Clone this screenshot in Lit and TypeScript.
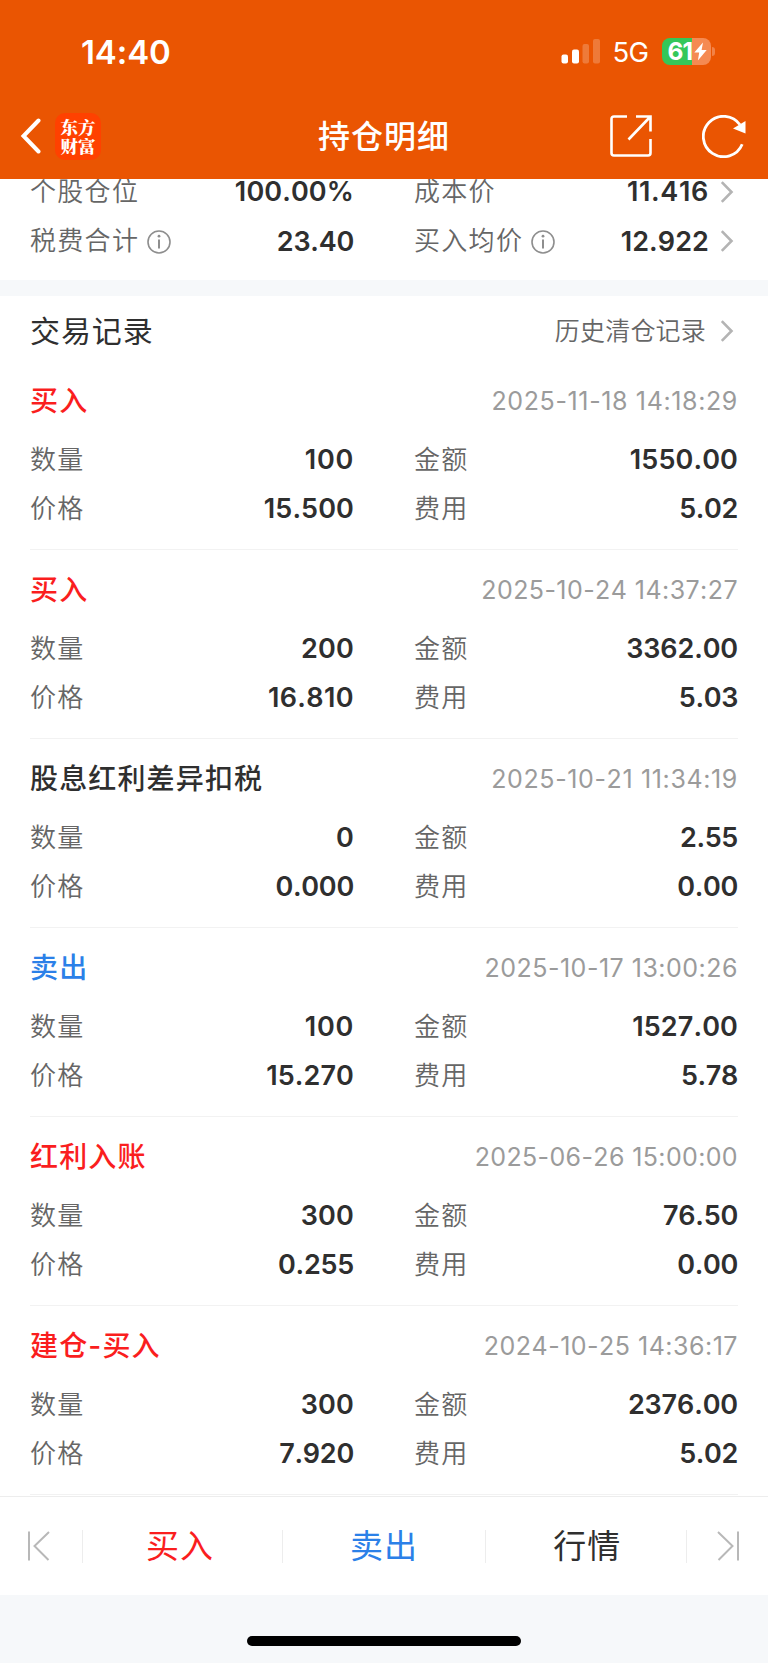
import { LitElement, html, css, svg } from "lit";
import { customElement, property } from "lit/decorators.js";
import { classMap } from "lit/directives/class-map.js";
import { styleMap } from "lit/directives/style-map.js";

type Tone = "buy" | "sell" | "plain";

interface TradeRecord {
  title: string;
  tone: Tone;
  time: string;
  count: string;
  amount: string;
  price: string;
  fee: string;
}

const RECORDS: TradeRecord[] = [
  { title: "买入", tone: "buy", time: "2025-11-18 14:18:29", count: "100", amount: "1550.00", price: "15.500", fee: "5.02" },
  { title: "买入", tone: "buy", time: "2025-10-24 14:37:27", count: "200", amount: "3362.00", price: "16.810", fee: "5.03" },
  { title: "股息红利差异扣税", tone: "plain", time: "2025-10-21 11:34:19", count: "0", amount: "2.55", price: "0.000", fee: "0.00" },
  { title: "卖出", tone: "sell", time: "2025-10-17 13:00:26", count: "100", amount: "1527.00", price: "15.270", fee: "5.78" },
  { title: "红利入账", tone: "buy", time: "2025-06-26 15:00:00", count: "300", amount: "76.50", price: "0.255", fee: "0.00" },
  { title: "建仓-买入", tone: "buy", time: "2024-10-25 14:36:17", count: "300", amount: "2376.00", price: "7.920", fee: "5.02" },
];

function tracking(text: string, base: number, perOne: number, perDot: number) {
  const ones = text.split("1").length - 1;
  const dots = text.split(".").length - 1;
  const px = base + (ones * perOne - dots * perDot) / text.length;
  return styleMap({ letterSpacing: `${px.toFixed(3)}px` });
}

const valueTracking = (text: string) => tracking(text, 0.15, 1.7, 2);

const chevron = html`<svg class="chevron" width="14" height="24" viewBox="0 0 14 24" fill="none">
  ${svg`<path d="M1.8 2.2L11.5 12L1.8 21.8" stroke="#b4b4b4" stroke-width="2.6"/>`}
</svg>`;

const info = html`<svg class="info" width="24" height="24" viewBox="0 0 24 24" fill="none">
  ${svg`<circle cx="12" cy="12" r="11" stroke="#8e8e8e" stroke-width="1.6"/>
  <path d="M12 9.4V18.6" stroke="#8e8e8e" stroke-width="2"/>
  <circle cx="12" cy="6.2" r="1.4" fill="#8e8e8e"/>`}
</svg>`;

@customElement("status-bar")
class StatusBar extends LitElement {
  static styles = css`
    :host { display: flex; align-items: center; height: 102px; padding: 0 53px 0 81px; box-sizing: border-box; color: #fff; font-family: Inter, sans-serif; }
    .time { flex: 1; font-size: 33px; font-weight: 600; letter-spacing: -0.1px; padding-top: 1px; }
    .signal { margin-right: 13px; }
    .net { width: 49px; font-size: 27.5px; letter-spacing: -0.6px; padding-top: 2px; }
    .battery { display: flex; align-items: center; }
    .cell { display: flex; align-items: center; width: 49px; height: 27px; padding-left: 6px; box-sizing: border-box; border-radius: 8px; background: linear-gradient(90deg, #34c759 61%, #f58a52 61%); }
    .level { width: 26px; font-size: 24.5px; font-weight: 700; letter-spacing: -1px; line-height: 27px; }
    .tip { width: 3px; height: 9px; margin-left: 1.5px; border-radius: 0 3px 3px 0; background: #f28247; }
  `;
  render() {
    return html`
      <span class="time">14:40</span>
      <svg class="signal" width="39" height="25" viewBox="0 0 39 25" fill="#fff">
        <rect x="0.5" y="15.5" width="6.5" height="9" rx="2" /><rect x="11" y="10.5" width="7" height="14" rx="2" />
        <rect x="21.5" y="5" width="6.5" height="19.5" rx="2" opacity=".22" /><rect x="32" y="0" width="7" height="24.5" rx="2" opacity=".22" />
      </svg>
      <span class="net">5G</span>
      <span class="battery">
        <span class="cell"><span class="level">61</span>
          <svg width="13" height="19" viewBox="0 0 13 19"><path d="M9 0.5L0.3 10.6H5.2L3.9 18.5L12.7 8H7.6Z" fill="#fff" /></svg>
        </span><span class="tip"></span>
      </span>`;
  }
}

@customElement("nav-bar")
class NavBar extends LitElement {
  static styles = css`
    :host { display: grid; grid-template-columns: 1fr auto 1fr; align-items: center; height: 77px; padding: 0 22px 0 20px; box-sizing: border-box; color: #fff; font-family: "Noto Sans CJK SC", sans-serif; }
    .left, .right { display: flex; align-items: center; margin-top: -9px; }
    .right { justify-content: flex-end; gap: 50px; }
    .logo { display: grid; grid-template-rows: 19px 19px; align-content: center; width: 46px; height: 47px; margin-left: 14px; border-radius: 10px; background: #ff4100; text-align: center; font: 900 17.5px/19px "Noto Serif CJK SC", "Noto Sans CJK SC", serif; }
    .title { margin: -13px 0 0 2px; font-size: 32px; font-weight: 500; line-height: 40px; letter-spacing: 1px; }
  `;
  render() {
    return html`
      <div class="left">
        <svg width="21" height="36" viewBox="0 0 21 36" fill="none"><path d="M18.5 2.5L3.5 18L18.5 33.5" stroke="#fff" stroke-width="4" stroke-linecap="round" /></svg>
        <div class="logo"><span>东方</span><span>财富</span></div>
      </div>
      <h1 class="title">持仓明细</h1>
      <div class="right">
        <svg width="42" height="42" viewBox="0 0 42 42" fill="none" stroke="#fff" stroke-width="2.6">
          <path d="M17 1.5H4Q1.5 1.5 1.5 4V38Q1.5 40.5 4 40.5H38Q40.5 40.5 40.5 38V24" />
          <path d="M26 1.5H40.5V16.5M40 2L18.5 24.5" />
        </svg>
        <svg width="44" height="43" viewBox="0 0 44 43" fill="none">
          <path d="M40.2 29.2A20.2 20.2 0 1 1 38 9.8" stroke="#fff" stroke-width="2.8" />
          <path d="M43.5 6V18.5L31 13.5Z" fill="#fff" />
        </svg>
      </div>`;
  }
}

@customElement("trade-record")
class TradeRecordItem extends LitElement {
  @property({ attribute: false }) record!: TradeRecord;

  static styles = css`
    :host { display: block; height: 189px; margin: 0 30px; padding-top: 19px; box-sizing: border-box; border-bottom: 1px solid #f2f2f2; font-family: Inter, "Noto Sans CJK SC", sans-serif; font-kerning: none; font-feature-settings: "calt" 0; }
    .head { display: flex; justify-content: space-between; align-items: center; height: 42px; margin-bottom: 13px; }
    .title { font-size: 28px; font-weight: 500; letter-spacing: 1.15px; line-height: 40px; color: #2f2f2f; }
    .buy { color: #fa1e1e; }
    .sell { color: #2b80e8; }
    .time { margin-top: -1px; font-size: 25px; color: #9b9b9b; }
    .grid { display: grid; grid-template-columns: 324px 324px; column-gap: 60px; grid-auto-rows: 49.4px; }
    .cell { display: flex; justify-content: space-between; align-items: center; }
    .label { font-size: 26px; font-weight: 350; letter-spacing: 1.2px; line-height: 38px; color: #666; }
    .value { margin-top: -1px; font-size: 27px; font-weight: 600; color: #2f2f2f; }
  `;
  private cell(label: string, value: string) {
    return html`<div class="cell"><span class="label">${label}</span><span class="value" style=${valueTracking(value)}>${value}</span></div>`;
  }
  render() {
    const r = this.record;
    return html`
      <div class="head">
        <span class=${classMap({ title: true, buy: r.tone === "buy", sell: r.tone === "sell" })}>${r.title}</span>
        <span class="time" style=${tracking(r.time, 0.3, 1.25, 0)}>${r.time}</span>
      </div>
      <div class="grid">
        ${this.cell("数量", r.count)} ${this.cell("金额", r.amount)}
        ${this.cell("价格", r.price)} ${this.cell("费用", r.fee)}
      </div>`;
  }
}

@customElement("action-bar")
class ActionBar extends LitElement {
  static styles = css`
    :host { display: grid; grid-template-columns: 82px 200px 203px 200.5px 1fr; align-items: center; height: 99px; border-top: 1px solid #ededed; box-sizing: border-box; background: #fff; font-family: "Noto Sans CJK SC", sans-serif; }
    .item { display: flex; align-items: center; justify-content: center; height: 33px; font-size: 33px; letter-spacing: 1px; border-left: 1px solid #ededed; box-sizing: border-box; color: #2f2f2f; }
    .item span { margin-top: -4px; }
    .buy { color: #fa1e1e; padding-right: 5px; }
    .sell { color: #2b80e8; }
    .quote { padding-left: 3px; }
    .edge { border-left: none; }
    .first { padding-right: 5px; }
    .last { border-left: 1px solid #ededed; padding-left: 2px; }
  `;
  render() {
    const arrow = svg`<path d="M2 0.5V29.5M22 1L7.5 15L21.5 29" />`;
    return html`
      <div class="item edge first"><svg width="24" height="30" viewBox="0 0 24 30" fill="none" stroke="#b8b8b8" stroke-width="2">${arrow}</svg></div>
      <div class="item buy"><span>买入</span></div>
      <div class="item sell"><span>卖出</span></div>
      <div class="item quote"><span>行情</span></div>
      <div class="item last"><svg width="24" height="30" viewBox="0 0 24 30" fill="none" stroke="#b8b8b8" stroke-width="2"><g transform="matrix(-1 0 0 1 24 0)">${arrow}</g></svg></div>`;
  }
}

@customElement("app-root")
class AppRoot extends LitElement {
  static styles = css`
    :host { display: flex; flex-direction: column; width: 768px; height: 1663px; overflow: hidden; background: #fff; font-family: Inter, "Noto Sans CJK SC", sans-serif; font-kerning: none; font-feature-settings: "calt" 0; }
    .top { height: 179px; flex: none; background: #ea5502; }
    .summary { display: grid; grid-template-columns: 324px 324px; column-gap: 60px; grid-auto-rows: 49.4px; height: 101px; padding: 0 30px; box-sizing: border-box; overflow: hidden; align-content: end; padding-bottom: 14px; flex: none; }
    .cell { display: flex; align-items: center; }
    .label { font-size: 26px; font-weight: 350; letter-spacing: 1.3px; line-height: 38px; color: #666; }
    .value { margin-left: auto; font-size: 27px; font-weight: 600; color: #2f2f2f; }
    .info { margin-left: 8px; margin-top: 2px; }
    .chevron { margin-left: 11px; margin-right: 4px; }
    .band { height: 16px; flex: none; background: #f6f8fa; }
    .section { display: flex; align-items: center; height: 65px; padding: 5px 30px 0; box-sizing: border-box; flex: none; }
    .section-title { margin: 0; font-size: 30px; font-weight: 400; letter-spacing: 0.9px; line-height: 44px; color: #2f2f2f; }
    .history { margin-left: auto; margin-right: 3px; font-size: 25px; font-weight: 350; letter-spacing: 0.2px; line-height: 36px; color: #666; }
    .records { height: 1135px; flex: none; }
    .home { flex: 1; display: flex; justify-content: center; background: #f6f8fa; }
    .handle { width: 274px; height: 10px; margin-top: 41px; border-radius: 5px; background: #000; }
  `;
  private value(text: string) {
    return html`<span class="value" style=${valueTracking(text)}>${text}</span>`;
  }
  render() {
    return html`
      <header class="top"><status-bar></status-bar><nav-bar></nav-bar></header>
      <section class="summary">
        <div class="cell"><span class="label">个股仓位</span>${this.value("100.00%")}</div>
        <div class="cell"><span class="label">成本价</span>${this.value("11.416")}${chevron}</div>
        <div class="cell"><span class="label">税费合计</span>${info}${this.value("23.40")}</div>
        <div class="cell"><span class="label">买入均价</span>${info}${this.value("12.922")}${chevron}</div>
      </section>
      <div class="band"></div>
      <div class="section"><h2 class="section-title">交易记录</h2><span class="history">历史清仓记录</span>${chevron}</div>
      <main class="records">${RECORDS.map((r) => html`<trade-record .record=${r}></trade-record>`)}</main>
      <action-bar></action-bar>
      <footer class="home"><div class="handle"></div></footer>`;
  }
}
